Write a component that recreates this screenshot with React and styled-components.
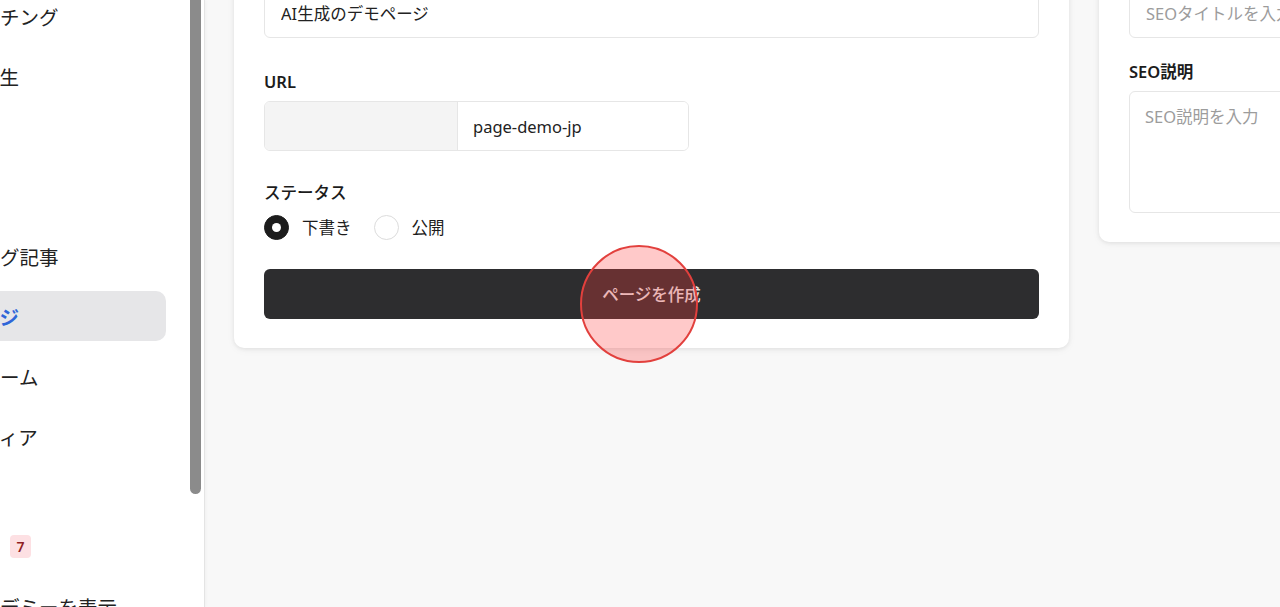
import React from 'react'
import styled, { createGlobalStyle } from 'styled-components'

const GlobalStyle = createGlobalStyle`
    html, body {
        margin: 0;
        padding: 0;
        height: 100%;
    }
    body {
        font-family: "Noto Sans", "Noto Sans CJK JP", sans-serif;
        color: #1f1f1f;
        background: #f8f8f8;
    }
    #root {
        height: 100%;
    }
`;

const navItems = [
    { label: 'マッチング' },
    { label: 'AI再生' },
    { label: '記事' },
    { label: '設定' },
    { label: 'ブログ記事' },
    { label: 'ページ', active: true },
    { label: 'フォーム' },
    { label: 'メディア' },
    { divider: true },
    { label: '通知', badge: 7 },
    { label: 'アカデミーを表示' },
]

const App = () => {
    return (
        <Layout>
            <GlobalStyle />
            <Sidebar>
                <Nav>
                    <NavList>
                        {navItems.map((item, i) =>
                            item.divider
                                ? <NavSpacer key={i} />
                                : (
                                    <NavItem key={i} active={item.active}>
                                        <span>{item.label}</span>
                                        {item.badge && <Badge>{item.badge}</Badge>}
                                    </NavItem>
                                )
                        )}
                    </NavList>
                </Nav>
                <ScrollTrack>
                    <ScrollThumb />
                </ScrollTrack>
            </Sidebar>

            <Main>
                <Content>
                    <Card width="835px">
                        <Label>タイトル</Label>
                        <TextInput defaultValue="AI生成のデモページ" readOnly />

                        <Label spaced="32px">URL</Label>
                        <UrlGroup>
                            <UrlPrefix />
                            <UrlInput defaultValue="page-demo-jp" readOnly />
                        </UrlGroup>

                        <Label spaced="30px" weight={500}>ステータス</Label>
                        <RadioRow>
                            <RadioOption>
                                <Radio checked />
                                <span>下書き</span>
                            </RadioOption>
                            <RadioOption>
                                <Radio />
                                <span>公開</span>
                            </RadioOption>
                        </RadioRow>

                        <ButtonWrap>
                            <SubmitButton>ページを作成</SubmitButton>
                            <ClickMarker />
                        </ButtonWrap>
                    </Card>

                    <Card width="380px">
                        <Label>SEOタイトル</Label>
                        <TextInput placeholder="SEOタイトルを入力" readOnly />

                        <Label spaced="22px">SEO説明</Label>
                        <TextArea placeholder="SEO説明を入力" readOnly />
                    </Card>
                </Content>
            </Main>
        </Layout>
    )
}

export default App


const Layout = styled.div`
    display: flex;
    height: 100vh;
    overflow: hidden;
`;

/* sidebar */
const Sidebar = styled.aside`
    display: flex;
    width: 204px;
    flex-shrink: 0;
    background: #ffffff;
    border-right: 1px solid #e4e4e4;
    box-shadow: 1px 0 3px rgba(0,0,0,0.03);
    z-index: 1;
`;
const Nav = styled.nav`
    width: 190px;
    overflow: hidden;
`;
const NavList = styled.ul`
    list-style: none;
    margin: -9px 24px 0 -60px;
    padding: 0;
    display: flex;
    flex-direction: column;
    gap: 10px;
`;
const NavItem = styled.li`
    display: flex;
    align-items: center;
    height: 50px;
    padding-left: 21px;
    border-radius: 10px;
    font-size: 19.5px;
    white-space: nowrap;
    color: ${props => props.active ? '#2f66d8' : '#222222'};
    font-weight: ${props => props.active ? 700 : 400};
    background: ${props => props.active ? '#e6e6e8' : 'transparent'};
`;
const NavSpacer = styled.li`
    height: 40px;
`;
const Badge = styled.span`
    margin-left: 10px;
    display: inline-flex;
    align-items: center;
    justify-content: center;
    width: 21px;
    height: 23px;
    border-radius: 4px;
    background: #fde0e3;
    color: #8f1d22;
    font-size: 14px;
    font-weight: 600;
`;
const ScrollTrack = styled.div`
    width: 13px;
    display: flex;
    flex-direction: column;
`;
const ScrollThumb = styled.div`
    width: 11px;
    height: 514px;
    margin-top: -20px;
    border-radius: 6px;
    background: #8b8b8b;
`;

/* main */
const Main = styled.main`
    flex: 1;
    min-width: 0;
    background: #f8f8f8;
    padding-left: 29px;
    overflow: hidden;
`;
const Content = styled.div`
    display: flex;
    align-items: flex-start;
    gap: 30px;
    margin-top: -73px;
`;
const Card = styled.section`
    width: ${props => props.width};
    flex-shrink: 0;
    box-sizing: border-box;
    padding: 30px 30px 29px;
    background: #ffffff;
    border-radius: 10px;
    box-shadow: 0 1px 4px rgba(0,0,0,0.08), 0 2px 10px rgba(0,0,0,0.04);
    display: flex;
    flex-direction: column;
`;
const Label = styled.div`
    font-size: 16.5px;
    line-height: 24px;
    font-weight: ${props => props.weight || 600};
    margin-top: ${props => props.spaced || 0};
    margin-bottom: ${props => props.weight ? '9px' : '7px'};
    color: #1c1c1c;
`;
const TextInput = styled.input`
    box-sizing: border-box;
    height: 50px;
    width: 100%;
    padding: 0 16px;
    border: 1px solid #e6e6e6;
    border-radius: 6px;
    font-family: inherit;
    font-size: 16.5px;
    color: #222;
    outline: none;
    background: #fff;
    &::placeholder {
        color: #9c9c9c;
    }
`;
const UrlGroup = styled.div`
    display: flex;
    width: 425px;
    height: 50px;
    border: 1px solid #e6e6e6;
    border-radius: 6px;
    overflow: hidden;
    box-sizing: border-box;
`;
const UrlPrefix = styled.div`
    width: 192px;
    background: #f4f4f4;
    border-right: 1px solid #e6e6e6;
`;
const UrlInput = styled.input`
    flex: 1;
    min-width: 0;
    border: none;
    padding: 0 15px;
    font-family: inherit;
    font-size: 16.5px;
    color: #222;
    outline: none;
`;
const RadioRow = styled.div`
    display: flex;
    align-items: center;
    gap: 22px;
    height: 26px;
`;
const RadioOption = styled.label`
    display: flex;
    align-items: center;
    gap: 13px;
    font-size: 16.5px;
    color: #1c1c1c;
`;
const Radio = styled.span`
    box-sizing: border-box;
    width: 25px;
    height: 25px;
    border-radius: 50%;
    display: flex;
    align-items: center;
    justify-content: center;
    background: ${props => props.checked ? '#1c1c1c' : '#ffffff'};
    border: 1px solid ${props => props.checked ? '#1c1c1c' : '#dcdcdc'};
    &::after {
        content: '';
        display: ${props => props.checked ? 'block' : 'none'};
        width: 9px;
        height: 9px;
        border-radius: 50%;
        background: #ffffff;
    }
`;
const ButtonWrap = styled.div`
    position: relative;
    margin-top: 29px;
`;
const SubmitButton = styled.button`
    width: 100%;
    height: 50px;
    border: none;
    border-radius: 6px;
    background: #2d2d2f;
    color: #e6e6e6;
    font-family: inherit;
    font-size: 16.5px;
    font-weight: 500;
    cursor: pointer;
`;
const ClickMarker = styled.span`
    position: absolute;
    left: 316px;
    top: -24px;
    width: 118px;
    height: 118px;
    box-sizing: border-box;
    border-radius: 50%;
    border: 2.5px solid #e2403d;
    background: rgba(255, 60, 60, 0.28);
    pointer-events: none;
`;
const TextArea = styled.textarea`
    box-sizing: border-box;
    height: 122px;
    width: 100%;
    padding: 12px 15px;
    border: 1px solid #e6e6e6;
    border-radius: 6px;
    font-family: inherit;
    font-size: 16.5px;
    resize: none;
    outline: none;
    &::placeholder {
        color: #9c9c9c;
    }
`;
